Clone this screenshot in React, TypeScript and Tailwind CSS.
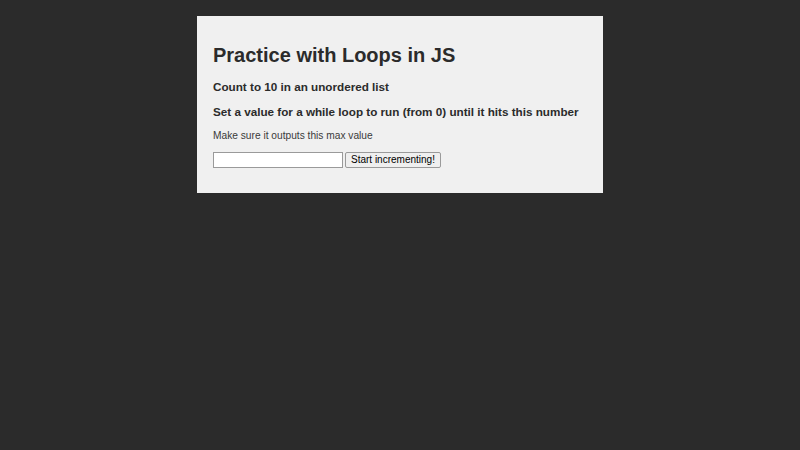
export default function App() {
  return (
    <div className="min-h-[450px] w-full bg-[#2b2b2b] pt-4" style={{ fontFamily: '"Liberation Sans", Arial, sans-serif' }}>
      <div className="mx-auto w-[406px] bg-[#f0f0f0] px-4 pt-[27px] pb-[25px] text-[#2b2b2b]">
        <h1 className="text-[20px] font-bold leading-[24px]">Practice with Loops in JS</h1>
        <h3 className="mt-[13px] whitespace-nowrap text-[11.7px] font-bold leading-[14px]">Count to 10 in an unordered list</h3>
        <h3 className="mt-[11px] whitespace-nowrap text-[11.7px] font-bold leading-[14px]">Set a value for a while loop to run (from 0) until it hits this number</h3>
        <p className="mt-[11px] text-[10.2px] leading-[12px] text-[#3a3a3a]">Make sure it outputs this max value</p>
        <div className="mt-[10px] flex items-center gap-[2px]">
          <input type="text" className="h-[16px] w-[130px] border border-[#9a9a9a] bg-white px-1 text-[10px]" />
          <button className="h-[16px] rounded-[2px] border border-[#9a9a9a] bg-[#efefef] px-[5px] text-[10px] leading-[12px] text-black">Start incrementing!</button>
        </div>
      </div>
    </div>
  );
}
